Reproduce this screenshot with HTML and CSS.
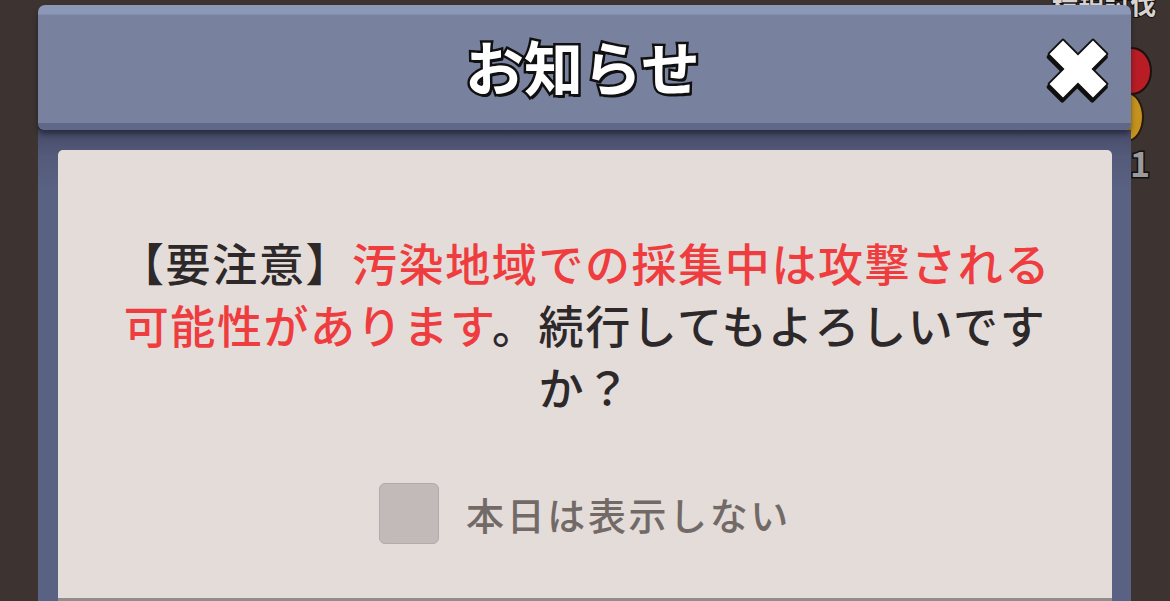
FILE: index.html
```html
<!DOCTYPE html>
<html lang="ja">
<head>
<meta charset="utf-8">
<title>お知らせ</title>
<link rel="stylesheet" href="styles.css">
</head>
<body>
<div class="scene">
  <div class="hud">
    <span class="hud-text">精鋭討伐</span>
    <span class="hud-red"></span>
    <span class="hud-gold"></span>
    <span class="hud-num">1</span>
  </div>
  <div class="dialog">
    <div class="header">
      <h1 class="title">お知らせ</h1>
      <button class="close" aria-label="閉じる">
        <svg width="70" height="70" viewBox="0 0 66 66">
          <g transform="rotate(45 33 33)">
            <path class="x-shadow" d="M24 4 H42 V24 H62 V42 H42 V62 H24 V42 H4 V24 H24 Z" transform="translate(1.5 2.5)"/>
            <path class="x-main" d="M24 4 H42 V24 H62 V42 H42 V62 H24 V42 H4 V24 H24 Z"/>
          </g>
        </svg>
      </button>
    </div>
    <div class="panel">
      <div class="content">
        <p class="message"><span class="dark">【要注意】</span><span class="red">汚染地域での採集中は攻撃される可能性があります</span><span class="dark">。続行してもよろしいですか？</span></p>
        <label class="option">
          <span class="checkbox"></span>
          <span class="option-text">本日は表示しない</span>
        </label>
      </div>
    </div>
  </div>
</div>
</body>
</html>
```
FILE: styles.css
```css
html, body {
  margin: 0;
  padding: 0;
}
body {
  width: 1170px;
  height: 601px;
  overflow: hidden;
  background: #3d3330;
  font-family: "Noto Sans CJK JP", "Noto Sans", sans-serif;
}
.scene {
  position: relative;
  width: 1170px;
  height: 601px;
  padding-top: 5px;
  box-sizing: border-box;
}
.hud {
  position: absolute;
  left: 1110px;
  top: 0;
  width: 60px;
  height: 200px;
}
.hud-text {
  position: absolute;
  right: 14px;
  top: -16px;
  font-size: 26px;
  font-weight: 700;
  color: #d8d2d0;
  white-space: nowrap;
  -webkit-text-stroke: 2px #111;
  paint-order: stroke fill;
}
.hud-red {
  position: absolute;
  left: 2px;
  top: 47px;
  width: 36px;
  height: 44px;
  border-radius: 50%;
  background: #b81c24;
  border: 2px solid #1d1010;
}
.hud-gold {
  position: absolute;
  left: 0;
  top: 92px;
  width: 30px;
  height: 46px;
  border-radius: 50%;
  background: #c4931f;
  border: 2px solid #2a1a0a;
}
.hud-num {
  position: absolute;
  left: 20px;
  top: 146px;
  font-size: 34px;
  font-weight: 700;
  color: #9c9a9a;
  -webkit-text-stroke: 3px #111;
  paint-order: stroke fill;
  line-height: 1;
}
.dialog {
  position: relative;
  margin-left: 38px;
  width: 1093px;
  height: 596px;
  display: flex;
  flex-direction: column;
}
.header {
  position: relative;
  z-index: 2;
  height: 118px;
  flex: 0 0 auto;
  background: linear-gradient(#8a97b6 0, #8a97b6 9px, #78829e 10px, #78829e 100%);
  border-bottom: 7px solid #5f6888;
  border-radius: 7px 7px 6px 6px;
  box-shadow: 0 4px 5px rgba(20, 22, 40, 0.55);
  display: flex;
  align-items: center;
  justify-content: center;
}
.title {
  margin: 0;
  margin-top: 2px;
  margin-right: 4px;
  font-size: 59px;
  font-weight: 700;
  line-height: 1;
  color: #ffffff;
  letter-spacing: 0;
  -webkit-text-stroke: 5px #101010;
  paint-order: stroke fill;
  text-shadow: 2px 3px 0 #101010;
}
.close {
  position: absolute;
  right: 18px;
  top: 29px;
  width: 70px;
  height: 70px;
  padding: 0;
  border: 0;
  background: transparent;
}
.close svg {
  display: block;
}
.x-shadow {
  fill: #101010;
  stroke: #101010;
  stroke-width: 4;
  stroke-linejoin: round;
}
.x-main {
  fill: #ffffff;
  stroke: #101010;
  stroke-width: 3.5;
  stroke-linejoin: round;
  paint-order: stroke fill;
}
.panel {
  flex: 1 1 auto;
  background: linear-gradient(#454a66 0, #535a7a 25px, #5a6283 60px, #5a6283 100%);
  padding: 20px 19px 0 20px;
  display: flex;
}
.content {
  flex: 1 1 auto;
  background: #e4dcd9;
  border-radius: 5px 5px 0 0;
  border-bottom: 3px solid #938c8d;
  padding-top: 82px;
  display: flex;
  flex-direction: column;
  align-items: center;
}
.message {
  margin: 0;
  width: 950px;
  font-size: 45px;
  line-height: 62px;
  font-weight: 500;
  letter-spacing: 1.6px;
  text-align: center;
  color: #2d292a;
}
.red {
  color: #ef3d3f;
}
.option {
  margin-top: 65px;
  display: flex;
  align-items: center;
  gap: 27px;
}
.checkbox {
  width: 58px;
  height: 59px;
  border-radius: 6px;
  background: #c2bab8;
  border: 1px solid #b3aba9;
}
.option-text {
  font-size: 38px;
  font-weight: 500;
  letter-spacing: 2.6px;
  color: #726a67;
  line-height: 1;
}
```
